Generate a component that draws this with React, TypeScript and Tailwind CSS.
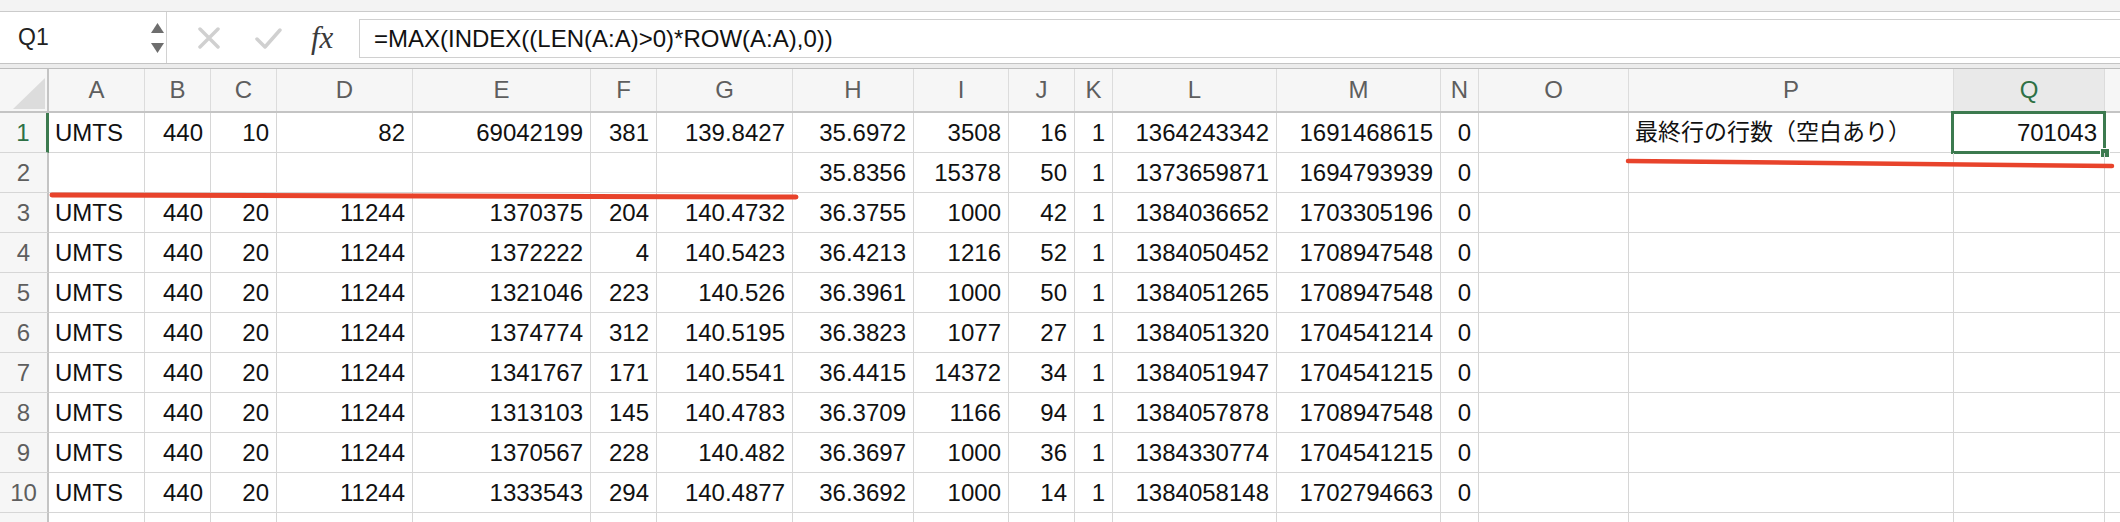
import React from "react";

const letters = ["A", "B", "C", "D", "E", "F", "G", "H", "I", "J", "K", "L", "M", "N", "O", "P", "Q"];

const rows: string[][] = [
  ["UMTS", "440", "10", "82", "69042199", "381", "139.8427", "35.6972", "3508", "16", "1", "1364243342", "1691468615", "0", "", "最終行の行数（空白あり）", "701043"],
  ["", "", "", "", "", "", "", "35.8356", "15378", "50", "1", "1373659871", "1694793939", "0", "", "", ""],
  ["UMTS", "440", "20", "11244", "1370375", "204", "140.4732", "36.3755", "1000", "42", "1", "1384036652", "1703305196", "0", "", "", ""],
  ["UMTS", "440", "20", "11244", "1372222", "4", "140.5423", "36.4213", "1216", "52", "1", "1384050452", "1708947548", "0", "", "", ""],
  ["UMTS", "440", "20", "11244", "1321046", "223", "140.526", "36.3961", "1000", "50", "1", "1384051265", "1708947548", "0", "", "", ""],
  ["UMTS", "440", "20", "11244", "1374774", "312", "140.5195", "36.3823", "1077", "27", "1", "1384051320", "1704541214", "0", "", "", ""],
  ["UMTS", "440", "20", "11244", "1341767", "171", "140.5541", "36.4415", "14372", "34", "1", "1384051947", "1704541215", "0", "", "", ""],
  ["UMTS", "440", "20", "11244", "1313103", "145", "140.4783", "36.3709", "1166", "94", "1", "1384057878", "1708947548", "0", "", "", ""],
  ["UMTS", "440", "20", "11244", "1370567", "228", "140.482", "36.3697", "1000", "36", "1", "1384330774", "1704541215", "0", "", "", ""],
  ["UMTS", "440", "20", "11244", "1333543", "294", "140.4877", "36.3692", "1000", "14", "1", "1384058148", "1702794663", "0", "", "", ""],
  ["", "", "", "", "", "", "", "", "", "", "", "", "", "", "", "", ""],
];

const gridCols =
  "grid grid-cols-[49px_96px_66px_66px_136px_178px_66px_136px_121px_95px_66px_38px_164px_164px_38px_150px_325px_151px_1fr]";

const isText = (v: string) => v !== "" && isNaN(Number(v));

export default function App() {
  return (
    <div className="relative w-[2120px] h-[522px] overflow-hidden bg-white font-['Liberation_Sans','Noto_Sans_CJK_JP',sans-serif] text-[#111]">
      {/* top strip */}
      <div className="h-[12px] bg-[#f3f3f3] border-b border-[#cbcbcb]" />

      {/* formula bar */}
      <div className="flex h-[52px] border-b border-[#c4c4c4]">
        <div className="w-[167px] border-r border-[#d2d2d2] flex items-center justify-between pl-[18px] pr-[2px]">
          <span className="text-[23px] text-[#222]">Q1</span>
          <div className="flex flex-col gap-[10px]">
            <svg width="13" height="10" viewBox="0 0 13 10">
              <polygon points="6.5,0 13,10 0,10" fill="#6e6e6e" />
            </svg>
            <svg width="13" height="10" viewBox="0 0 13 10">
              <polygon points="0,0 13,0 6.5,10" fill="#6e6e6e" />
            </svg>
          </div>
        </div>
        <div className="w-[192px] flex items-center pl-[31px]">
          <svg width="22" height="22" viewBox="0 0 22 22">
            <path d="M2 2 L20 20 M20 2 L2 20" stroke="#d0d0d0" strokeWidth="3.5" strokeLinecap="round" />
          </svg>
          <svg width="27" height="22" viewBox="0 0 27 22" className="ml-[35px]">
            <path d="M2 12 L10 20 L25 3" stroke="#d0d0d0" strokeWidth="3.5" fill="none" strokeLinecap="round" strokeLinejoin="round" />
          </svg>
          <span className="ml-[29px] font-['Liberation_Serif',serif] italic text-[31px] text-[#3a3a3a] leading-none">fx</span>
        </div>
        <div className="flex-1 mt-[7px] h-[39px] border-l border-t border-b border-[#d0d0d0] flex items-center pl-[14px] text-[24px]">
          =MAX(INDEX((LEN(A:A)&gt;0)*ROW(A:A),0))
        </div>
      </div>
      <div className="h-[5px] bg-[#ececec] border-b border-[#bdbdbd]" />

      {/* column header */}
      <div className={`${gridCols} h-[44px] bg-[#f6f6f6] border-b-2 border-[#c4c4c4]`}>
        <div className="relative border-r-2 border-[#c4c4c4]">
          <svg width="32" height="32" viewBox="0 0 32 32" className="absolute left-[13px] top-[9px]">
            <polygon points="32,0 32,31 0,31" fill="#dcdcdc" />
          </svg>
        </div>
        {letters.map((l) => (
          <div
            key={l}
            className={`flex items-center justify-center border-r border-[#dcdcdc] text-[24px] ${
              l === "Q" ? "bg-[#e9e9e9] text-[#2e7045]" : "text-[#5e5e5e]"
            }`}
          >
            {l}
          </div>
        ))}
        <div />
      </div>

      {/* rows */}
      {rows.map((r, i) => (
        <div key={i} className={`${gridCols} h-[40px]`}>
          <div
            className={`flex items-center justify-center bg-[#f6f6f6] text-[24px] border-b border-[#d6d6d6] ${
              i === 0 ? "border-r-[3px] border-r-[#3c7a4f] text-[#2e7045]" : "border-r-2 border-r-[#c4c4c4] text-[#5e5e5e]"
            }`}
          >
            {i < 10 ? i + 1 : ""}
          </div>
          {r.map((v, j) => (
            <div
              key={j}
              className={`relative flex items-center border-r border-b border-[#d6d6d6] text-[24px] whitespace-nowrap ${
                isText(v) ? "justify-start pl-[6px]" : "justify-end pr-[7px]"
              }`}
            >
              {j === 15 && v ? <span className="text-[23px]">{v}</span> : v}
              {i === 0 && j === 16 && (
                <>
                  <div className="absolute -left-[3px] -top-[2px] -right-[2px] -bottom-[2px] border-[3px] border-[#3c7a4f]" />
                  <div className="absolute -right-[6px] -bottom-[6px] w-[10px] h-[10px] bg-[#3c7a4f] border border-white" />
                </>
              )}
            </div>
          ))}
          <div className="border-b border-[#d6d6d6]" />
        </div>
      ))}

      {/* red annotation lines */}
      <svg className="absolute left-0 top-0 pointer-events-none" width="2120" height="522">
        <line x1="52" y1="195" x2="796" y2="197" stroke="#e8432b" strokeWidth="5" strokeLinecap="round" />
        <line x1="1628" y1="161" x2="2112" y2="166" stroke="#e8432b" strokeWidth="4.5" strokeLinecap="round" />
      </svg>
    </div>
  );
}
